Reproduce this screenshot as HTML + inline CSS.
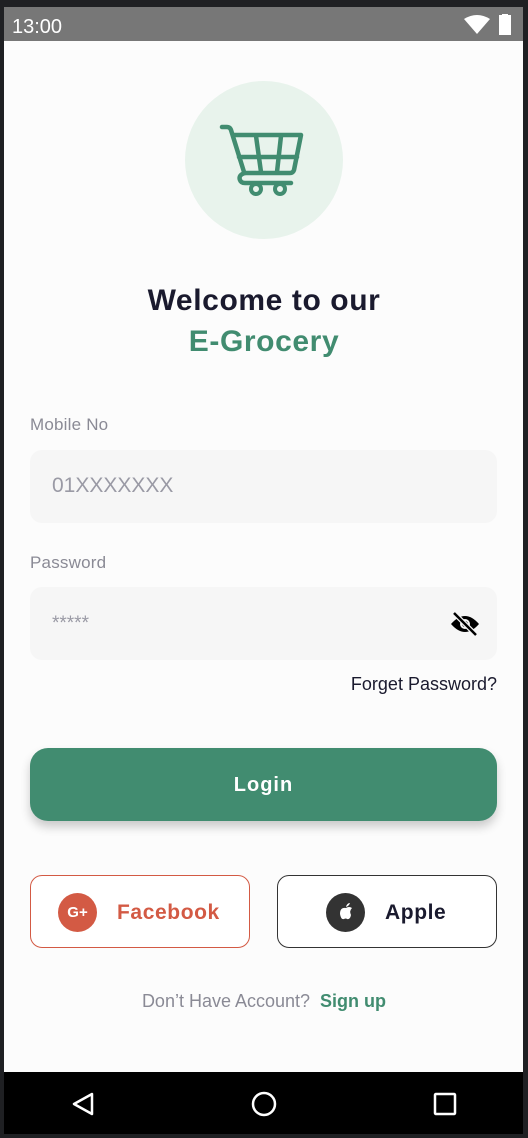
<!DOCTYPE html>
<html><head><meta charset="utf-8"><style>
*{margin:0;padding:0;box-sizing:border-box}
body{width:528px;height:1138px;background:#1f2023;position:relative;overflow:hidden;font-family:"Liberation Sans",sans-serif}
.abs{position:absolute}
#status{left:4px;top:7px;width:519px;height:34px;background:#777}
#content{left:4px;top:41px;width:519px;height:1031px;background:#fcfcfc}
#nav{left:4px;top:1072px;width:519px;height:62px;background:#000}
.label{position:absolute;left:30px;font-size:17px;color:#8a8a95;letter-spacing:0.2px}
.input{position:absolute;left:30px;width:467px;height:73px;background:#f6f6f6;border-radius:12px}
.ph{position:absolute;left:22px;top:24px;font-size:21px;color:#9a9aa5}
.btn{position:absolute;top:875px;width:220px;height:73px;border-radius:12px;background:#fff}
</style></head><body>
<div class="abs" id="status"></div>
<div class="abs" style="left:12px;top:16px;font-size:20px;color:#fff">13:00</div>
<svg class="abs" style="left:462px;top:14px" width="52" height="22" viewBox="0 0 52 22">
<path d="M2 5 Q15 -3 28 5 L15 20 Z" fill="#fff"/>
<rect x="37" y="1" width="12" height="20" fill="#fff"/><rect x="40" y="0" width="6" height="2" fill="#fff"/>
</svg>
<div class="abs" id="content"></div>
<div class="abs" style="left:185px;top:81px;width:158px;height:158px;border-radius:50%;background:#e8f3ec"></div>
<svg class="abs" style="left:0;top:0" width="528" height="240" viewBox="0 0 528 240">
<g fill="none" stroke="#418c70" stroke-width="4.5" stroke-linecap="round" stroke-linejoin="round">
<path d="M222 127 H227 Q230 127 231 130 L244 172"/>
<path d="M234 135 H301 L294 170 Q293 173 290 173 H245"/>
<path d="M239 157 H297"/>
<path d="M256 136 L261 172 M281 136 L277 172"/>
<path d="M245 173 Q238 175 240 180 Q241 183 245 183 H291"/>
</g>
<circle cx="256" cy="189" r="5" fill="none" stroke="#418c70" stroke-width="4"/>
<circle cx="280" cy="189" r="5" fill="none" stroke="#418c70" stroke-width="4"/>
</svg>
<div class="abs" style="left:0;width:528px;top:284px;text-align:center;font-size:30px;font-weight:bold;color:#1a1a2e;letter-spacing:0.6px">Welcome to our</div>
<div class="abs" style="left:0;width:528px;top:325px;text-align:center;font-size:30px;font-weight:bold;color:#418c70;letter-spacing:0.6px">E-Grocery</div>
<div class="label" style="top:415px">Mobile No</div>
<div class="input" style="top:450px"><div class="ph">01XXXXXXX</div></div>
<div class="label" style="top:553px">Password</div>
<div class="input" style="top:587px"><div class="ph" style="top:26px;font-size:19px">*****</div>
<svg class="abs" style="left:420px;top:24px" width="30" height="26" viewBox="0 0 30 26">
<path d="M1 13 Q15 -3 29 13 Q15 29 1 13Z" fill="#000"/>
<circle cx="15" cy="13" r="5" fill="#f6f6f6"/><circle cx="15" cy="13" r="3" fill="#000"/>
<path d="M4 2 L26 24" stroke="#f6f6f6" stroke-width="5"/><path d="M4 2 L26 24" stroke="#000" stroke-width="2.5"/>
</svg></div>
<div class="abs" style="right:31px;top:674px;font-size:18px;color:#1a1a2e">Forget Password?</div>
<div class="abs" style="left:30px;top:748px;width:467px;height:73px;border-radius:18px;background:#418c70;box-shadow:0 6px 10px rgba(0,0,0,0.2);color:#fff;font-weight:bold;font-size:20px;text-align:center;line-height:75px;letter-spacing:1px">Login</div>
<div class="btn" style="left:30px;border:1.5px solid #d35a44">
<div class="abs" style="left:27px;top:17px;width:39px;height:39px;border-radius:50%;background:#d35a44;color:#fff;font-weight:bold;font-size:15px;text-align:center;line-height:39px">G+</div>
<div class="abs" style="left:86px;top:25px;font-size:21px;font-weight:bold;color:#d35a44;letter-spacing:0.6px">Facebook</div></div>
<div class="btn" style="left:277px;border:1.5px solid #333">
<div class="abs" style="left:48px;top:17px;width:39px;height:39px;border-radius:50%;background:#333"></div>
<svg class="abs" style="left:57px;top:25px" width="22" height="22" viewBox="0 0 22 22"><path d="M11 7 Q14 5 17 7 Q14 10 16 14 Q15 19 12 18 Q11 17 9 18 Q6 19 5 13 Q5 6 11 7Z M11 6 Q12 2 15 2 Q14 5 11 6Z" fill="#fff"/></svg>
<div class="abs" style="left:107px;top:25px;font-size:21px;font-weight:bold;color:#1a1a2e;letter-spacing:0.6px">Apple</div></div>
<div class="abs" style="left:0;width:528px;top:991px;text-align:center;font-size:18px;color:#8a8a95">Don’t Have Account? &nbsp;<b style="color:#418c70">Sign up</b></div>
<div class="abs" id="nav"></div>
<svg class="abs" style="left:60px;top:1085px" width="410" height="36" viewBox="0 0 410 36">
<path d="M32 9 L14 19 L32 29 Z" fill="none" stroke="#fff" stroke-width="2.5" stroke-linejoin="round"/>
<circle cx="204" cy="19" r="11" fill="none" stroke="#fff" stroke-width="2.5"/>
<rect x="375" y="9" width="20" height="20" rx="1" fill="none" stroke="#fff" stroke-width="2.5"/>
</svg>
</body></html>
